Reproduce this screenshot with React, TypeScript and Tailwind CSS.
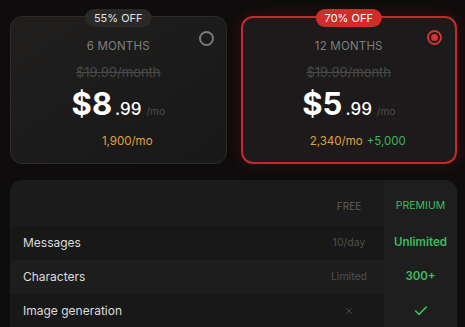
import { Check, X } from 'lucide-react';

type Plan = {
  badge: string;
  months: string;
  price: string;
  cents: string;
  credits: string;
  bonus?: string;
  selected: boolean;
};

const plans: Plan[] = [
  { badge: '55% OFF', months: '6 MONTHS', price: '$8', cents: '.99', credits: '1,900/mo', selected: false },
  { badge: '70% OFF', months: '12 MONTHS', price: '$5', cents: '.99', credits: '2,340/mo', bonus: '+5,000', selected: true },
];

function PlanCard({ plan }: { plan: Plan }) {
  return (
    <div
      className={
        plan.selected
          ? 'relative flex flex-col items-center h-[148px] rounded-[12px] border-2 border-[#c42a2a] bg-[#1c1a1a] shadow-[0_0_18px_rgba(190,30,30,0.22)]'
          : 'relative flex flex-col items-center h-[148px] rounded-[12px] border border-[#2d2c2b] bg-gradient-to-br from-[#201f1e] to-[#191818]'
      }
    >
      <div
        className={
          plan.selected
            ? 'absolute -top-[9px] left-1/2 -translate-x-1/2 h-[18px] px-[9px] rounded-full bg-[#d22b2b] text-white text-[11px] leading-[18px]'
            : 'absolute -top-[8px] left-1/2 -translate-x-1/2 h-[18px] px-[9px] rounded-full bg-[#2a2928] text-[#e2e2e2] text-[11px] leading-[18px]'
        }
      >
        {plan.badge}
      </div>
      {plan.selected ? (
        <div className="absolute top-[12px] right-[13px] w-[15px] h-[15px] rounded-full border-2 border-[#d93030] grid place-items-center">
          <div className="w-[7px] h-[7px] rounded-full bg-[#d93030]" />
        </div>
      ) : (
        <div className="absolute top-[14px] right-[12px] w-[15px] h-[15px] rounded-full border-2 border-[#7a7a7a]" />
      )}
      <div className={plan.selected ? 'mt-[20px] text-[11.5px] text-[#7f7f7f] tracking-[0.2px]' : 'mt-[21px] text-[11.5px] text-[#7f7f7f] tracking-[0.2px]'}>
        {plan.months}
      </div>
      <div className="mt-[8px] text-[13px] text-[#4a4a4a] line-through">$19.99/month</div>
      <div className="mt-[3px] flex items-baseline text-white">
        <span className="text-[31px] font-bold leading-[36px]">{plan.price}</span>
        <span className="ml-[3px] text-[17px] font-medium">{plan.cents}</span>
        <span className="ml-[5px] text-[10px] text-[#4c4c4c]">/mo</span>
      </div>
      <div className="mt-[11px] pl-[18px] flex gap-[4px] text-[11.5px]">
        <span className="text-[#e3a13b]">{plan.credits}</span>
        {plan.bonus && <span className="text-[#3cb65a]">{plan.bonus}</span>}
      </div>
    </div>
  );
}

const rows = [
  { label: 'Messages', free: '10/day', premium: 'Unlimited' },
  { label: 'Characters', free: 'Limited', premium: '300+' },
  { label: 'Image generation', free: 'x', premium: 'check' },
];

export default function App() {
  return (
    <div
      className="w-[465px] h-[327px] overflow-hidden bg-[#0e0c0c] pt-[16px] pl-[10px] pr-[8px]"
      style={{ fontFamily: 'Inter, "Noto Sans", sans-serif' }}
    >
      <div className="grid grid-cols-2 gap-[14px]">
        {plans.map((plan) => (
          <PlanCard key={plan.months} plan={plan} />
        ))}
      </div>
      <div className="mt-[16px] rounded-t-[12px] bg-[#1b1b1b] overflow-hidden grid grid-cols-[1fr_70px_73px]">
        <div className="h-[46px]" />
        <div className="h-[46px] pt-[6px] grid place-items-center text-[10px] text-[#5e5e5e]">FREE</div>
        <div className="h-[46px] pt-[6px] grid place-items-center text-[10.5px] text-[#3fbb5e] bg-[#1e1e1e]">PREMIUM</div>
        {rows.map((row, i) => (
          <div key={row.label} className="contents">
            <div className={`h-[34px] flex items-center pl-[13px] text-[12px] text-[#dcdcdc] ${i % 2 === 0 ? 'bg-[#181818]' : 'bg-[#1d1d1d]'}`}>
              {row.label}
            </div>
            <div className={`h-[34px] grid place-items-center text-[10.5px] text-[#4f4f4f] ${i % 2 === 0 ? 'bg-[#181818]' : 'bg-[#1d1d1d]'}`}>
              {row.free === 'x' ? <X size={12} strokeWidth={2} className="text-[#4a4a4a]" /> : row.free}
            </div>
            <div className="h-[34px] grid place-items-center text-[11.5px] font-semibold text-[#3fbb5e] bg-[#1e1e1e]">
              {row.premium === 'check' ? <Check size={16} strokeWidth={2.5} className="text-[#3fbb5e]" /> : row.premium}
            </div>
          </div>
        ))}
      </div>
    </div>
  );
}
